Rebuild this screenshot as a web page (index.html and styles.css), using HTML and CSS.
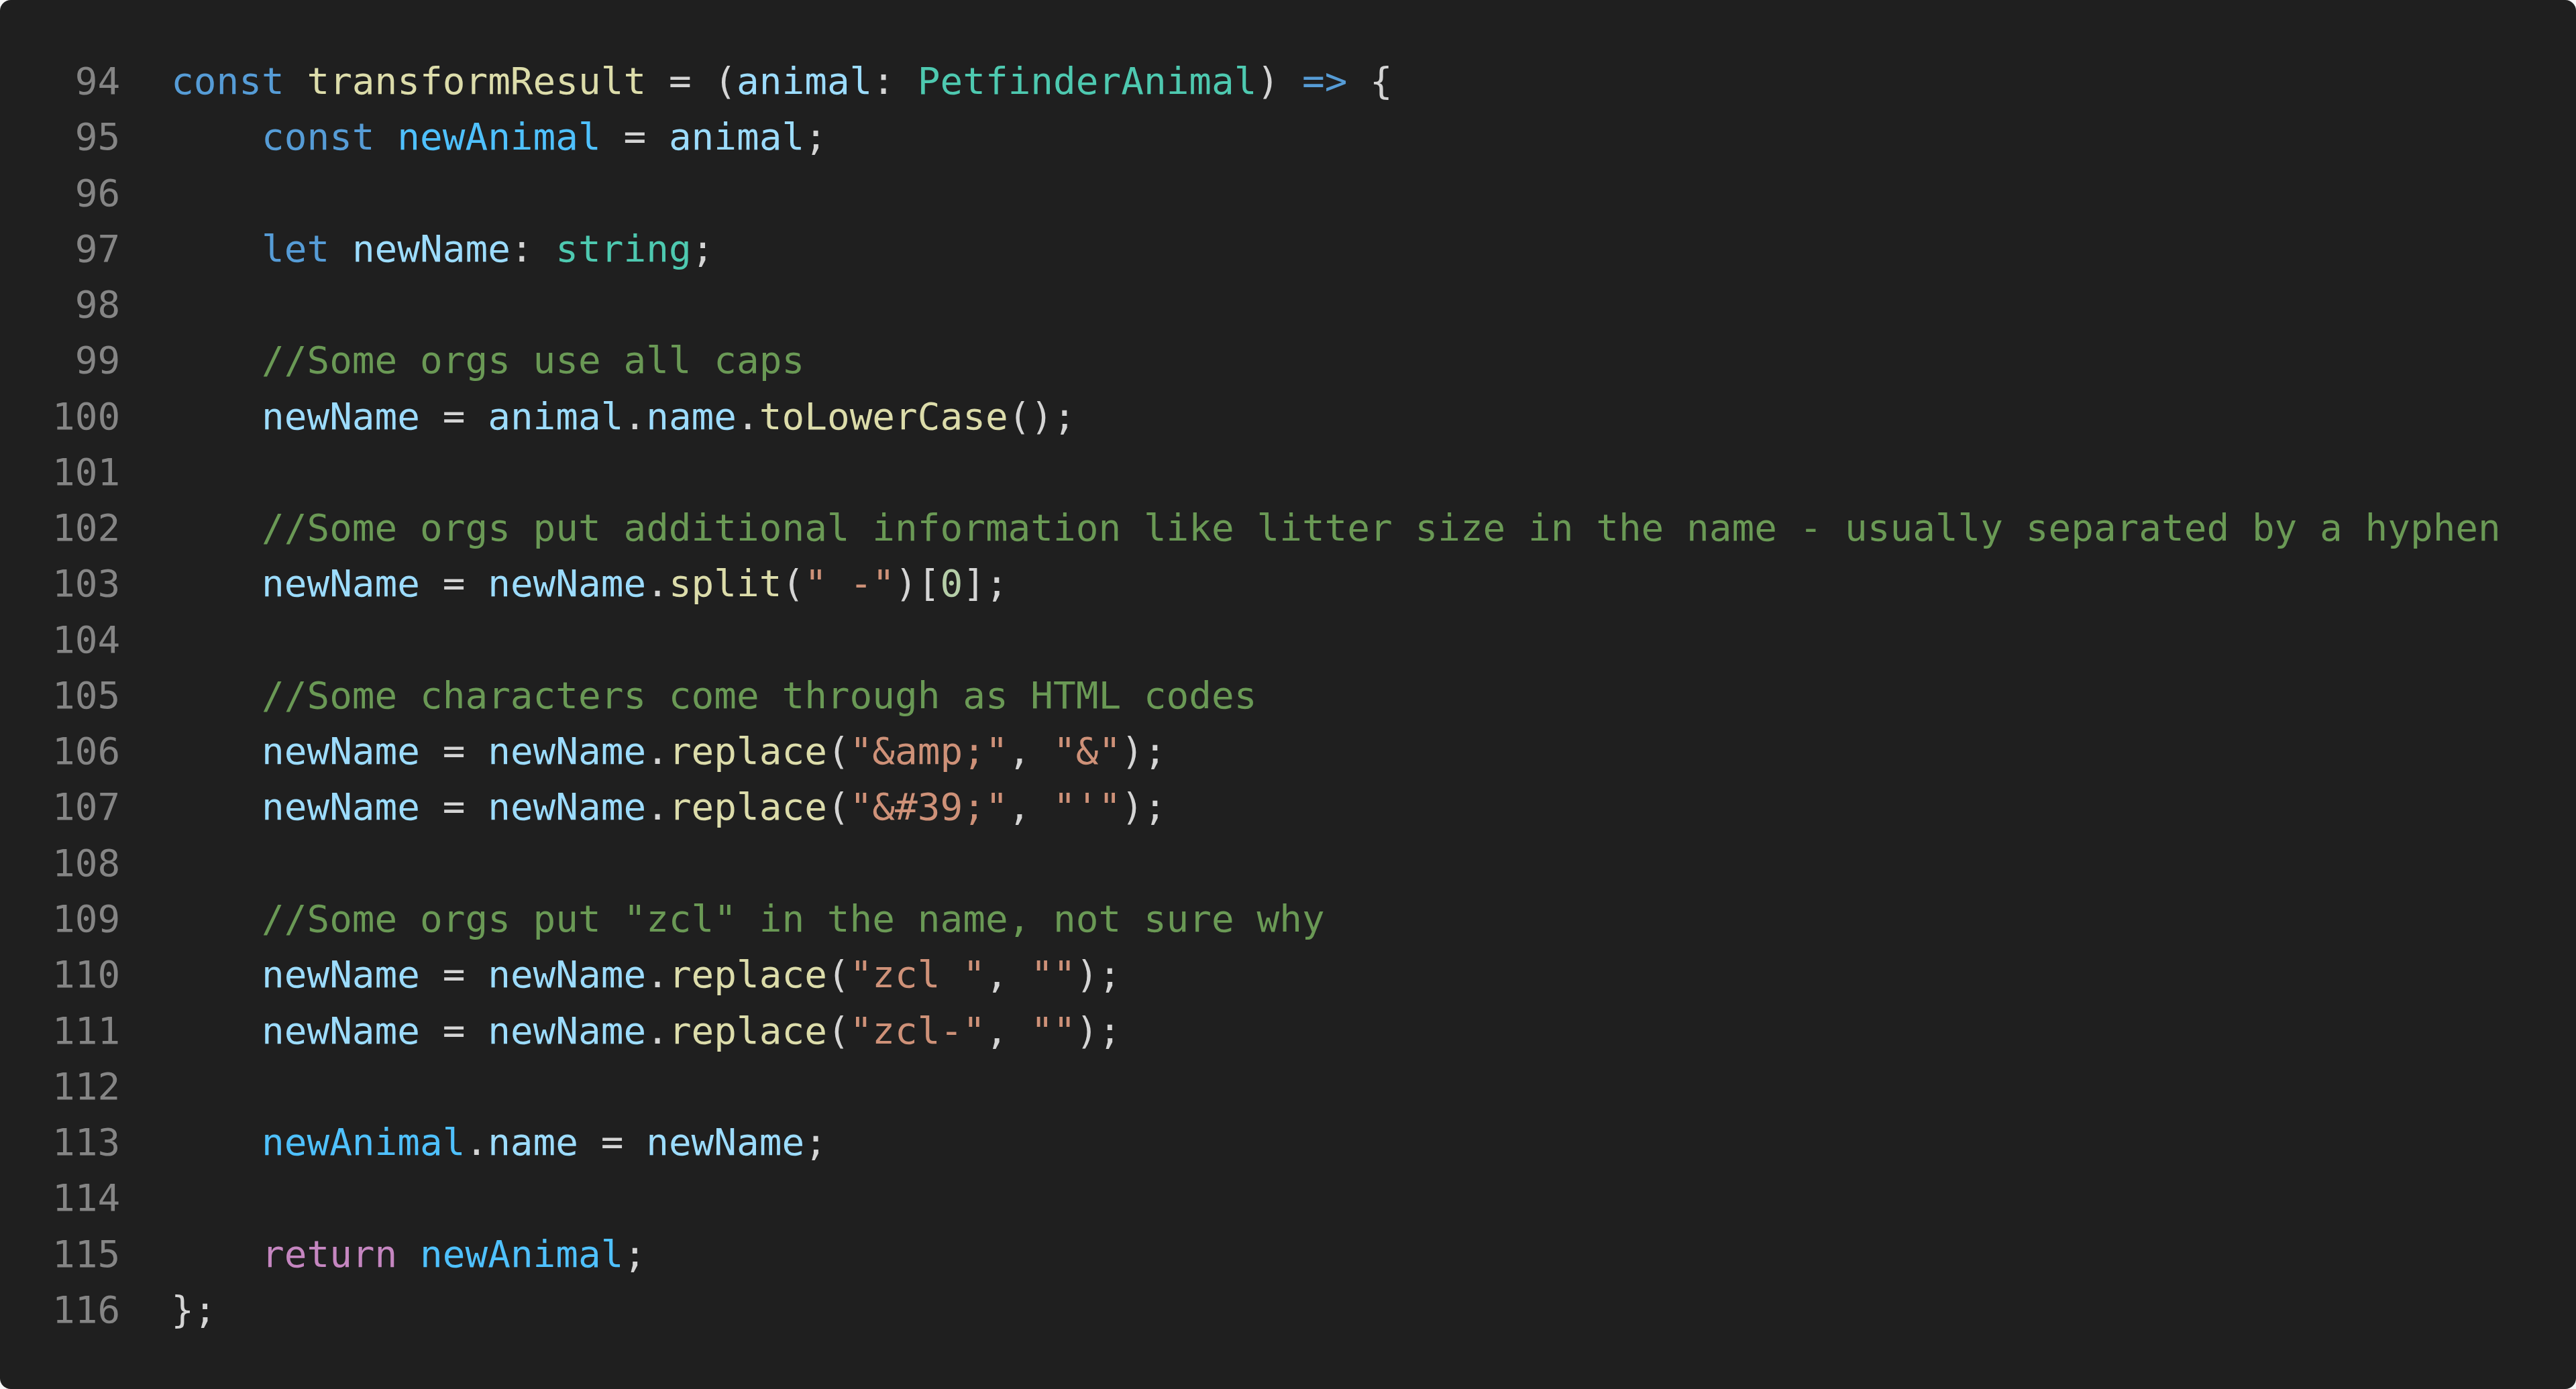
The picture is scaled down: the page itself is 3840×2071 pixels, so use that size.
FILE: index.html
```html
<!DOCTYPE html>
<html lang="en">
<head>
<meta charset="utf-8">
<title>transformResult</title>
<link rel="stylesheet" href="styles.css">
</head>
<body>
<div class="editor">
<div class="line"><span class="ln">94</span><span class="code"><span class="kw">const</span> <span class="fn">transformResult</span> = (<span class="var">animal</span>: <span class="ty">PetfinderAnimal</span>) <span class="kw">=&gt;</span> {</span></div>
<div class="line"><span class="ln">95</span><span class="code">    <span class="kw">const</span> <span class="cv">newAnimal</span> = <span class="var">animal</span>;</span></div>
<div class="line"><span class="ln">96</span><span class="code"></span></div>
<div class="line"><span class="ln">97</span><span class="code">    <span class="kw">let</span> <span class="var">newName</span>: <span class="ty">string</span>;</span></div>
<div class="line"><span class="ln">98</span><span class="code"></span></div>
<div class="line"><span class="ln">99</span><span class="code">    <span class="cm">//Some orgs use all caps</span></span></div>
<div class="line"><span class="ln">100</span><span class="code">    <span class="var">newName</span> = <span class="var">animal</span>.<span class="var">name</span>.<span class="fn">toLowerCase</span>();</span></div>
<div class="line"><span class="ln">101</span><span class="code"></span></div>
<div class="line"><span class="ln">102</span><span class="code">    <span class="cm">//Some orgs put additional information like litter size in the name - usually separated by a hyphen</span></span></div>
<div class="line"><span class="ln">103</span><span class="code">    <span class="var">newName</span> = <span class="var">newName</span>.<span class="fn">split</span>(<span class="str">" -"</span>)[<span class="num">0</span>];</span></div>
<div class="line"><span class="ln">104</span><span class="code"></span></div>
<div class="line"><span class="ln">105</span><span class="code">    <span class="cm">//Some characters come through as HTML codes</span></span></div>
<div class="line"><span class="ln">106</span><span class="code">    <span class="var">newName</span> = <span class="var">newName</span>.<span class="fn">replace</span>(<span class="str">"&amp;amp;"</span>, <span class="str">"&amp;"</span>);</span></div>
<div class="line"><span class="ln">107</span><span class="code">    <span class="var">newName</span> = <span class="var">newName</span>.<span class="fn">replace</span>(<span class="str">"&amp;#39;"</span>, <span class="str">"'"</span>);</span></div>
<div class="line"><span class="ln">108</span><span class="code"></span></div>
<div class="line"><span class="ln">109</span><span class="code">    <span class="cm">//Some orgs put "zcl" in the name, not sure why</span></span></div>
<div class="line"><span class="ln">110</span><span class="code">    <span class="var">newName</span> = <span class="var">newName</span>.<span class="fn">replace</span>(<span class="str">"zcl "</span>, <span class="str">""</span>);</span></div>
<div class="line"><span class="ln">111</span><span class="code">    <span class="var">newName</span> = <span class="var">newName</span>.<span class="fn">replace</span>(<span class="str">"zcl-"</span>, <span class="str">""</span>);</span></div>
<div class="line"><span class="ln">112</span><span class="code"></span></div>
<div class="line"><span class="ln">113</span><span class="code">    <span class="cv">newAnimal</span>.<span class="var">name</span> = <span class="var">newName</span>;</span></div>
<div class="line"><span class="ln">114</span><span class="code"></span></div>
<div class="line"><span class="ln">115</span><span class="code">    <span class="ctl">return</span> <span class="cv">newAnimal</span>;</span></div>
<div class="line"><span class="ln">116</span><span class="code">};</span></div>
</div>
</body>
</html>
```
FILE: styles.css
```css
html, body {
  margin: 0;
  padding: 0;
  background: #f6f6f6;
}

.editor {
  box-sizing: border-box;
  width: 100vw;
  height: 100vh;
  background: #1f1f1f;
  border-radius: 16px;
  padding: 79px 0 0 78px;
  font-family: "DejaVu Sans Mono", "Liberation Mono", monospace;
  font-size: 56px;
  color: #d4d4d4;
  overflow: hidden;
}

.line {
  display: flex;
  height: 83.27px;
  line-height: 83.27px;
  white-space: pre;
}

.ln {
  width: 3ch;
  text-align: right;
  color: #858585;
  margin-right: 76px;
  flex: none;
}

.code { white-space: pre; }

.kw { color: #569cd6; }
.ctl { color: #c586c0; }
.fn { color: #dcdcaa; }
.var { color: #9cdcfe; }
.cv { color: #4fc1ff; }
.ty { color: #4ec9b0; }
.str { color: #ce9178; }
.num { color: #b5cea8; }
.cm { color: #6a9955; }
```
